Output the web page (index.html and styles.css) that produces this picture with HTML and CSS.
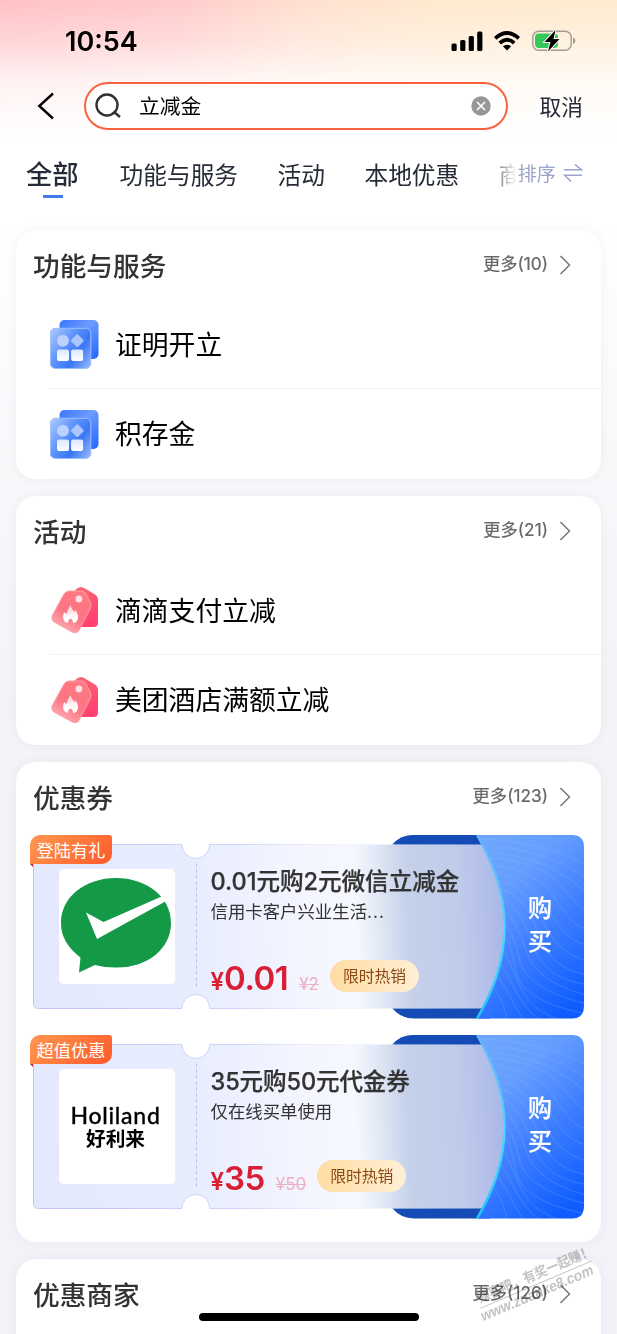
FILE: index.html
```
<!DOCTYPE html>
<html lang="zh-CN">
<head>
<meta charset="utf-8">
<title>搜索</title>
<link rel="stylesheet" href="styles.css">
</head>
<body>
<svg class="defs" width="0" height="0" aria-hidden="true">
  <defs>
    <linearGradient id="appBack" x1="0" y1="0" x2="1" y2="1"><stop offset="0" stop-color="#3b78ff"/><stop offset=".45" stop-color="#6d9bff"/><stop offset="1" stop-color="#2066ff"/></linearGradient>
    <linearGradient id="appFront" x1="0" y1="0.15" x2="1" y2="0.85"><stop offset="0" stop-color="#a3c4fd"/><stop offset=".38" stop-color="#5f94fb"/><stop offset=".68" stop-color="#3a77f6"/><stop offset="1" stop-color="#8cb0fb"/></linearGradient>
    <linearGradient id="appCell" x1="0" y1="0" x2="0" y2="1"><stop offset="0" stop-color="#dce8ff"/><stop offset="1" stop-color="#fff"/></linearGradient>
    <linearGradient id="tagBack" x1="0" y1="0" x2=".4" y2="1"><stop offset="0" stop-color="#fa6b72"/><stop offset="1" stop-color="#ff4273"/></linearGradient>
    <linearGradient id="tagFront" x1=".7" y1=".1" x2=".2" y2="1"><stop offset="0" stop-color="#ff7882"/><stop offset=".5" stop-color="#fb7683"/><stop offset="1" stop-color="#ffb4bb"/></linearGradient>
    <linearGradient id="flame" x1="0" y1="0" x2="0" y2="1"><stop offset="0" stop-color="#ffc9cf"/><stop offset=".7" stop-color="#fff"/></linearGradient>
    <linearGradient id="paper" gradientUnits="userSpaceOnUse" x1="0" y1="20" x2="474" y2="0"><stop offset="0" stop-color="#e3e8fd"/><stop offset=".34" stop-color="#e8edfe"/><stop offset=".57" stop-color="#f4f5ff"/><stop offset=".68" stop-color="#f6f8fe"/><stop offset=".74" stop-color="#dde4f3"/><stop offset=".79" stop-color="#c5d1ea"/><stop offset=".9" stop-color="#bfcbea"/><stop offset=".96" stop-color="#b2beea"/><stop offset="1" stop-color="#a7b4e6"/></linearGradient>
    <linearGradient id="edge" x1="0" y1="0" x2="1" y2="0"><stop offset="0" stop-color="#bfc3fa"/><stop offset=".45" stop-color="#ced4fb"/><stop offset=".7" stop-color="#dfe4fb" stop-opacity=".3"/><stop offset="1" stop-color="#fff" stop-opacity="0"/></linearGradient>
    <linearGradient id="buy" x1=".25" y1="0" x2=".75" y2="1"><stop offset="0" stop-color="#6ca4ff"/><stop offset=".22" stop-color="#669eff"/><stop offset=".6" stop-color="#3b7cff"/><stop offset="1" stop-color="#0f5dff"/></linearGradient>
    <linearGradient id="rim" x1="0" y1="0" x2="0" y2="1"><stop offset="0" stop-color="#62b5ff"/><stop offset=".5" stop-color="#4fd3ff"/><stop offset="1" stop-color="#25c7fb"/></linearGradient>
    <clipPath id="buyClip"><path d="M447 0H542Q554 0 554 12V171Q554 183.500 542 183.500H447Q502 92 447 0Z"/></clipPath>
    <symbol id="app" viewBox="0 0 50 50">
      <rect x="9.500" y="1" width="39" height="39" rx="5" fill="url(#appBack)"/>
      <rect x=".3" y="9.300" width="40.500" height="40.200" rx="5" fill="url(#appFront)" stroke="#9dbefd"/>
      <circle cx="12.900" cy="21.700" r="6" fill="#bcd1fe"/>
      <rect x="22.400" y="16.800" width="9.800" height="9.800" rx="1.500" transform="rotate(45 27.300 21.700)" fill="#a9c6fe"/>
      <rect x="7" y="30.500" width="12" height="11.600" rx="2" fill="url(#appCell)"/>
      <rect x="21.100" y="30.500" width="12" height="11.600" rx="2" fill="url(#appCell)"/>
    </symbol>
    <symbol id="deal" viewBox="0 0 50 50">
      <path d="M27 3.500Q31 .5 35 3.500L45 9.500Q48 11.500 48 15V37.500Q48 42 43.500 42H22V8Z" fill="url(#tagBack)"/>
      <path d="M19 6H31Q34.500 6 36 9L40.500 18Q41.500 20.500 40.500 23L29 45.500Q26.500 49 22.500 47.200L4 37Q1 35 2 31L14 9Q16 6 19 6Z" fill="url(#tagFront)" stroke="#ffa0a8"/>
      <circle cx="28.900" cy="14" r="3.400" fill="#ffe0e3"/>
      <path d="M20.500 20Q21 23.500 24 26.500Q25 27.500 25.700 25Q30 33 26.500 36.500Q25 38 23 38Q23.300 35 20.500 33.500Q17.500 35 18 38Q13 37 13 31.500Q13 29 14.500 27Q16 29 16.500 29Q17.500 24.500 20.500 20Z" fill="url(#flame)"/>
    </symbol>
    <symbol id="ticket" viewBox="0 0 554 184">
      <path d="M362 10Q370 0 382 0H460V183.500H384Q371 183.500 362 173Z" fill="#154bb5"/>
      <path d="M3.500 9.500H151.800A14 14 0 0 0 179.800 9.500H452Q495 92 452 173.500H179.800A14 14 0 0 0 151.800 173.500H8.500Q3.500 173.500 3.500 168.500Z" fill="url(#paper)"/>
      <path d="M452 9.500H179.800A14 14 0 0 1 151.800 9.500H3.500V168.500Q3.500 173.500 8.500 173.500H151.800A14 14 0 0 1 179.800 173.500H452" fill="none" stroke="url(#edge)"/>
      <path d="M166.500 28.500V153" stroke="#b9b9fb" stroke-dasharray="3 3"/>
      <path d="M447 0H542Q554 0 554 12V171Q554 183.500 542 183.500H447Q502 92 447 0Z" fill="url(#buy)"/>
      <g clip-path="url(#buyClip)" fill="none" stroke="#9cc5ff" stroke-opacity=".25">
        <path d="M448 4Q515 6 560 32M450 10Q520 14 560 46M454 17Q519 20 560 61M458 23Q510 25 532 52T560 77M461 30Q506 34 526 65T560 94M464 37Q502 43 519 75T560 111M467 45Q499 52 513 86T560 126M469 53Q496 61 508 98T560 140M472 63Q490 71 502 108T560 150M474 76Q487 85 496 116T560 161M475 89Q484 98 490 126T560 170M475 103Q481 109 486 137T552 178M474 116Q482 134 492 155T532 186M470 128Q478 141 487 158T512 187M466 139Q475 150 482 165T496 187M461 150Q472 160 478 187"/>
      </g>
      <path d="M447 0Q502 92 447 183.500" fill="none" stroke="url(#rim)" stroke-width="2.400"/>
    </symbol>
    <symbol id="chev" viewBox="0 0 12 20"><path d="M1.500 1L10.500 10L1.500 19" fill="none" stroke="#777" stroke-width="1.500"/></symbol>
  </defs>
</svg>
<main class="screen">
  <header class="status">
    <div class="time">10:54</div>
    <svg class="signal" viewBox="0 0 32 20"><rect x="0.500" y="12.500" width="5.200" height="7.500" rx="1.500"/><rect x="9.200" y="9" width="5.200" height="11" rx="1.500"/><rect x="17.700" y="5" width="5.200" height="15" rx="1.500"/><rect x="26.200" y="0.500" width="5.200" height="19.500" rx="1.500"/></svg>
    <svg class="wifi" viewBox="0 0 26 20"><g fill="none" stroke="#000" stroke-width="3.700"><path d="M1.200 7.300Q13-3.400 24.800 7.300"/><path d="M5.700 12Q13 5.600 20.300 12"/></g><path d="M8.900 15.300Q13 12 17.100 15.300L13 19.600Z"/></svg>
    <svg class="battery" viewBox="0 0 44 22"><rect x=".8" y="1.300" width="38.400" height="18.900" rx="6" fill="none" stroke="#a29d96" stroke-width="1.400"/><path d="M41 7.500Q43.400 8.300 43.400 10.800T41 14Z" fill="#a29d96"/><rect x="3" y="3.500" width="23" height="14.500" rx="4" fill="#34c759"/><path d="M23.500 0L12.500 12H18.500L16 21.500L27.500 9H21.500Z" fill="#000" stroke="#fff8ee" stroke-width="2" paint-order="stroke"/></svg>
  </header>
  <div class="searchbar">
    <svg class="back" viewBox="0 0 18 28"><path d="M16 1.500L2.300 14L16 26.500" fill="none" stroke="#000" stroke-width="2.400"/></svg>
    <div class="field">
      <svg class="lens" viewBox="0 0 26 26"><circle cx="12" cy="12" r="10.500"/><path d="M18.500 18.500L25 24"/></svg>
      <span class="query">立减金</span>
      <svg class="clear" viewBox="0 0 20 20"><circle cx="10" cy="10" r="9.700" fill="#979797"/><path d="M6 6L14 14M14 6L6 14" stroke="#fff" stroke-width="1.700"/></svg>
    </div>
    <span class="cancel">取消</span>
  </div>
  <nav class="tabs">
    <span class="tab active">全部</span>
    <span class="tab">功能与服务</span>
    <span class="tab">活动</span>
    <span class="tab">本地优惠</span>
    <span class="tab cut">商</span>
    <span class="sort">排序</span>
    <svg class="swap" viewBox="0 0 20 20"><path d="M1 6.800H18.500L12 1.500M19 12.200H1.500L8 18.500" fill="none" stroke="#9aa3cc" stroke-width="1.600"/></svg>
  </nav>

  <section class="card">
    <div class="head"><h2>功能与服务</h2><span class="more">更多(10)</span><svg class="chev"><use href="#chev"/></svg></div>
    <div class="row"><svg class="icon"><use href="#app"/></svg><span>证明开立</span></div>
    <div class="row"><svg class="icon"><use href="#app"/></svg><span>积存金</span></div>
  </section>

  <section class="card">
    <div class="head"><h2>活动</h2><span class="more">更多(21)</span><svg class="chev"><use href="#chev"/></svg></div>
    <div class="row"><svg class="icon"><use href="#deal"/></svg><span>滴滴支付立减</span></div>
    <div class="row"><svg class="icon"><use href="#deal"/></svg><span>美团酒店满额立减</span></div>
  </section>

  <section class="card coupons">
    <div class="head"><h2>优惠券</h2><span class="more">更多(123)</span><svg class="chev"><use href="#chev"/></svg></div>
    <article class="coupon">
      <svg class="ticket"><use href="#ticket"/></svg>
      <div class="tag">登陆有礼</div>
      <div class="logo">
        <svg class="wechat" viewBox="0 0 116 115"><path d="M57 9C88 9 112 28 112 54S88 99 57 98.500Q45 98.500 36 96L20 103.500L21.500 88.500Q2 74 2 54C2 28 26 9 57 9Z" fill="#149947"/><path d="M27 43.500L44.500 53L106 26L109 31L38 70Z" fill="#fff"/></svg>
      </div>
      <div class="info">
        <h3>0.01元购2元微信立减金</h3>
        <p>信用卡客户兴业生活<span class="dots">...</span></p>
        <div class="price"><span class="yen">¥</span><b>0.01</b><s>¥2</s><span class="hot">限时热销</span></div>
      </div>
      <div class="buy">购<br>买</div>
    </article>
    <article class="coupon">
      <svg class="ticket"><use href="#ticket"/></svg>
      <div class="tag">超值优惠</div>
      <div class="logo holiland"><span class="latin">Holiland</span><span class="han">好利来</span></div>
      <div class="info">
        <h3 class="tight">35元购50元代金券</h3>
        <p>仅在线买单使用</p>
        <div class="price"><span class="yen">¥</span><b>35</b><s>¥50</s><span class="hot">限时热销</span></div>
      </div>
      <div class="buy">购<br>买</div>
    </article>
  </section>

  <section class="card last">
    <div class="head"><h2>优惠商家</h2><span class="more">更多(126)</span><svg class="chev"><use href="#chev"/></svg></div>
  </section>

  <svg class="watermark" viewBox="0 0 150 94">
    <g transform="translate(15 73) rotate(-23)">
      <text x="2" y="-10" font-size="14" textLength="124" lengthAdjust="spacingAndGlyphs">赚客吧，有奖一起赚！</text>
      <path d="M0-5H121" stroke="#c4c4c4"/>
      <text class="url" x="-2" y="8" font-size="15" textLength="121" lengthAdjust="spacingAndGlyphs">www.zuanke8.com</text>
    </g>
  </svg>
  <div class="home"></div>
</main>
</body>
</html>
```
FILE: styles.css
```
* { box-sizing: border-box; }
body {
  margin: 0;
  font-family: Inter, "Noto Sans CJK SC", sans-serif;
  color: #000;
}
h2, h3, p { margin: 0; }
svg { display: block; flex: none; }
.defs { position: absolute; }
.screen {
  position: relative;
  width: 617px;
  height: 1334px;
  overflow: hidden;
  background:
    linear-gradient(180deg, rgba(255,255,255,0) 0, rgba(255,255,255,.3) 40px, rgba(255,255,255,.78) 80px, #fff 138px, rgba(255,255,255,0) 139px) 0 0 / 100% 139px no-repeat,
    linear-gradient(98deg, #ffc2c6 0, #ffcbcb 28%, #ffe0d0 48%, #ffe9cf 68%, #ffebd0 100%) 0 0 / 100% 138px no-repeat,
    linear-gradient(180deg, #fff 0, #fff 220px, #f6f8fa 480px, #f2f4f8 700px, #f1f3f8 100%);
}
.status {
  display: flex;
  align-items: center;
  height: 82px;
  padding: 0 41px 0 65px;
}
.time { flex: 1; margin-top: 2px; font-size: 27px; font-weight: 600; line-height: 32px; letter-spacing: 0; }
.signal { width: 32px; height: 20px; margin-right: 11px; }
.wifi { width: 26px; height: 20px; margin-right: 12px; }
.battery { width: 44px; height: 22px; }
.searchbar {
  display: flex;
  align-items: center;
  height: 48px;
  padding: 0 34px 0 37px;
}
.back { width: 18px; height: 28px; margin-right: 29px; }
.field {
  display: flex;
  align-items: center;
  width: 424px;
  height: 48px;
  padding: 0 15px 0 9px;
  border: 2px solid #f9623e;
  border-radius: 24px;
  background: #fff;
}
.lens { width: 26px; height: 26px; fill: none; stroke: #303236; stroke-width: 2.4; }
.query { flex: 1; margin: 1px 0 0 18px; font-size: 20.8px; line-height: 30px; }
.clear { width: 20px; height: 20px; }
.cancel { margin: -2px 0 0 auto; font-size: 21.7px; color: #262b38; }
.tabs {
  display: flex;
  align-items: center;
  height: 92px;
  padding-left: 26px;
  white-space: nowrap;
  color: #262b38;
}
.tab { margin-right: 39.500px; font-size: 23.7px; line-height: 36px; }
.active { position: relative; margin: -2px 41px 0 0; font-size: 26.3px; font-weight: 500; }
.active::after {
  content: "";
  position: absolute;
  left: 17px;
  bottom: -5px;
  width: 20px;
  height: 3px;
  background: #447bea;
}
.cut {
  width: 16px;
  margin-right: 3px;
  overflow: hidden;
  color: transparent;
  background: linear-gradient(90deg, #85888f, #e9e9eb 90%);
  -webkit-background-clip: text;
  background-clip: text;
}
.sort { margin-bottom: 7px; font-size: 19px; color: #9aa3cc; }
.swap { width: 20px; height: 20px; margin: 0 0 6px 7px; }
.card {
  width: 585px;
  margin: 0 0 17px 16px;
  height: 249px;
  border-radius: 20px;
  background: #fff;
  box-shadow: 0 0 12px rgba(60,70,80,.06);
}
.tabs + .card { margin-top: 8px; }
.head { display: flex; align-items: center; height: 69px; padding: 0 30px 0 17px; }
.head h2 { flex: 1; margin-top: 3px; font-size: 26.7px; font-weight: 500; line-height: 40px; color: #333; }
.more { margin-top: -4px; font-size: 17.3px; color: #666; -webkit-text-stroke: .2px; }
.chev { width: 12px; height: 20px; margin-left: 11px; }
.row {
  display: flex;
  align-items: center;
  height: 89px;
  margin-left: 34px;
  padding-top: 1px;
  font-size: 26.8px;
}
.row span { margin-top: -2px; }
.row + .row { border-top: 1px solid #f1f1f1; }
.icon { width: 50px; height: 50px; margin-right: 15px; }
.coupons { height: 480px; }
.coupons .head { height: 72.5px; padding-bottom: 3.5px; }
.coupon {
  position: relative;
  display: grid;
  grid-template-columns: 180.5px 283.5px 1fr;
  width: 554px;
  height: 184px;
  margin: 0 0 16.500px 14px;
}
.ticket { position: absolute; inset: 0; width: 554px; height: 184px; }
.tag {
  position: absolute;
  left: 0;
  top: 0;
  z-index: 2;
  width: 82px;
  height: 29px;
  border-radius: 10px 3px 10px 0;
  background: linear-gradient(135deg, #ff9850, #ff5a2a);
  color: #fff;
  font-size: 17.2px;
  line-height: 31px;
  text-align: center;
}
.tag::after {
  content: "";
  position: absolute;
  left: 0;
  top: 29px;
  border-top: 3px solid #c2202c;
  border-left: 3px solid transparent;
}
.logo {
  position: relative;
  width: 116px;
  height: 115px;
  margin: 34px 0 0 29px;
  border-radius: 5px;
  background: #fff;
}
.wechat { width: 116px; height: 115px; }
.holiland {
  display: flex;
  flex-direction: column;
  align-items: center;
  justify-content: center;
  padding-bottom: 1px;
  padding-right: 3px;
}
.latin { font: 500 23px/25px Lato, sans-serif; letter-spacing: .75px; -webkit-text-stroke: .3px #000; }
.han { font-size: 19.7px; line-height: 22px; font-weight: 700; }
.info { position: relative; padding-top: 30px; white-space: nowrap; }
.info h3 { font-size: 23.6px; line-height: 34px; font-weight: 500; letter-spacing: -.05px; color: #333; -webkit-text-stroke: .25px; }
.info .tight { letter-spacing: -.15px; }
.info p { margin-top: -1px; font-size: 17.4px; line-height: 27px; color: #333; }
.dots { letter-spacing: 1px; }
.price { display: flex; align-items: baseline; margin-top: 33px; line-height: 40px; color: #d91f35; }
.yen { font-size: 24px; font-weight: 600; }
.price b { font-size: 33px; font-weight: 600; letter-spacing: -.5px; }
.price s { margin-left: 11px; font-size: 17px; color: #edafc2; }
.hot {
  position: relative;
  top: -8px;
  height: 32px;
  margin-left: 11px;
  padding: 0 13px;
  border-radius: 16px;
  background: linear-gradient(90deg, #ffdca3, #ffefd5);
  color: #8a4815;
  font-size: 15.8px;
  line-height: 33px;
}
.buy {
  position: relative;
  padding: 57px 0 0 34px;
  color: #fff;
  font-size: 24px;
  font-weight: 500;
  line-height: 33px;
  -webkit-text-stroke: .2px;
}
.last { height: 120px; }
.watermark { position: absolute; left: 467px; top: 1240px; width: 150px; height: 94px; fill: #c4c4c4; font-weight: 700; mix-blend-mode: multiply; }
.url { font-family: "Liberation Sans", sans-serif; font-style: italic; font-weight: 700; }
.home {
  position: absolute;
  left: 199px;
  top: 1313px;
  width: 220px;
  height: 8px;
  border-radius: 4px;
  background: #000;
}
```
